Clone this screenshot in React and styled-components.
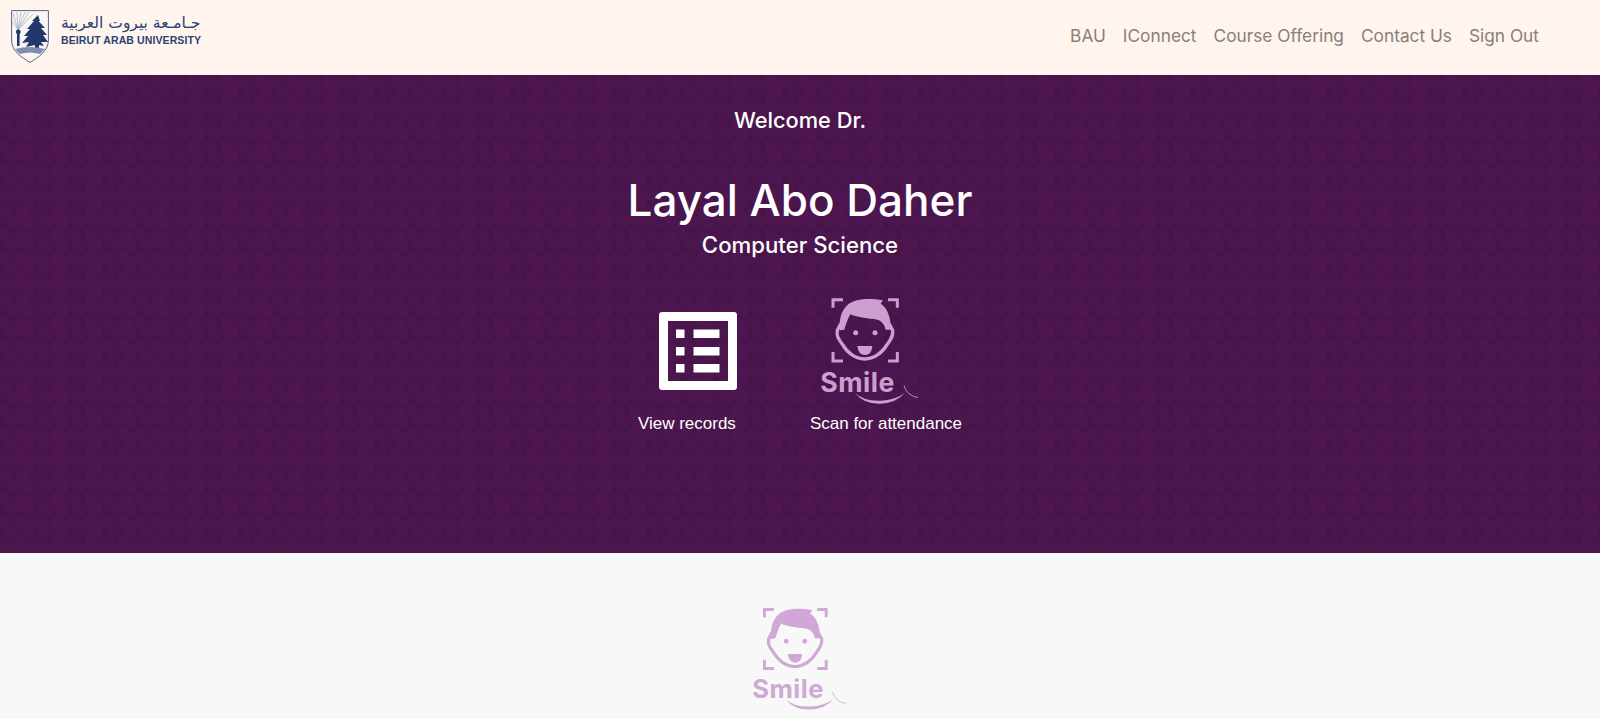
import React from "react";
import styled, { createGlobalStyle } from "styled-components";

const GlobalStyle = createGlobalStyle`
  html, body {
    margin: 0;
    padding: 0;
    height: 100%;
    overflow: hidden;
    background: #f8f8f8;
  }
`;

const Page = styled.div`
  display: flex;
  flex-direction: column;
  height: 719px;
  font-family: "Inter", "Liberation Sans", sans-serif;
`;

const Header = styled.header`
  display: flex;
  align-items: center;
  justify-content: space-between;
  height: 75px;
  padding: 0 61px 3px 11px;
  box-sizing: border-box;
  background: #fff4ee;
`;

const Brand = styled.a`
  display: flex;
  align-items: center;
  gap: 12px;
`;

const BrandText = styled.div`
  display: flex;
  flex-direction: column;
  width: 139px;
  margin-top: -13px;
  color: #2b4274;
`;

const BrandArabic = styled.span`
  font-family: "DejaVu Sans", sans-serif;
  font-size: 15.5px;
  line-height: 20px;
  text-align: center;
  white-space: nowrap;
`;

const BrandLatin = styled.span`
  font-family: "Liberation Sans", Arial, sans-serif;
  font-size: 10.5px;
  font-weight: 700;
  line-height: 14px;
  letter-spacing: 0.1px;
  white-space: nowrap;
`;

const Nav = styled.nav`
  display: flex;
  gap: 17px;
`;

const NavLink = styled.a`
  font-size: 17.3px;
  line-height: 24px;
  color: #8a7f78;
  white-space: nowrap;
`;

const Hero = styled.section`
  display: flex;
  flex-direction: column;
  align-items: center;
  height: 478px;
  padding-top: 31px;
  box-sizing: border-box;
  color: #fff;
  background-color: #4d1650;
  background-image:
    linear-gradient(45deg, rgba(0, 0, 0, 0.06) 25%, transparent 25%, transparent 75%, rgba(0, 0, 0, 0.06) 75%),
    linear-gradient(90deg, rgba(0, 0, 0, 0.03) 50%, transparent 50%);
  background-size: 17px 22px, 34px 22px;
`;

const Welcome = styled.h3`
  margin: 0;
  font-size: 21.8px;
  font-weight: 500;
  line-height: 28px;
`;

const Name = styled.h1`
  margin: 40px 0 0;
  font-size: 44px;
  font-weight: 500;
  line-height: 52px;
`;

const Department = styled.h4`
  margin: 5px 0 0;
  font-size: 22.2px;
  font-weight: 500;
  line-height: 28px;
`;

const Actions = styled.div`
  display: flex;
  gap: 73px;
  margin-top: 38px;
`;

const Action = styled.a`
  display: flex;
  flex-direction: column;
  align-items: flex-start;
  color: #fff;
`;

const ActionIcon = styled.div`
  display: flex;
  align-items: center;
  height: 108px;
  margin-left: ${(p) => p.$inset}px;
`;

const ActionLabel = styled.span`
  margin-top: 8px;
  font-family: "Liberation Sans", Arial, sans-serif;
  font-size: 17px;
  line-height: 22px;
  white-space: nowrap;
`;

const Footer = styled.section`
  display: flex;
  justify-content: center;
  flex: 1;
  padding: 46px 2px 0 0;
  background: #f8f8f8;
`;

const ShieldLogo = () => (
  <svg width="38" height="53" viewBox="0 0 38 53">
    <path d="M0.6 0.6 H37.4 V30 C37.4 41 28 47 19 52.4 C10 47 0.6 41 0.6 30 Z" fill="#fbf6f2" stroke="#51648e" strokeWidth="1" />
    <g stroke="#aab2c6" strokeWidth="0.8">
      <path d="M7 20 L2 3" />
      <path d="M7 20 L6 2" />
      <path d="M7 20 L10 2" />
      <path d="M7 20 L14 2" />
      <path d="M7 20 L18 2" />
      <path d="M7 20 L22 4" />
      <path d="M7 20 L2 12" />
    </g>
    <path
      d="M27 5 L29 11 L27.5 11 L34 18 L30 18 L36 25 L32 25 L37 32 L30 32 L33 36 L28 35 L28 41 L24 41 L24 35 L15 37 L18 32 L11 33 L17 26 L13 26 L19 19 L16 19 L23 11 L21 11 Z"
      fill="#22386d"
    />
    <rect x="6" y="24" width="2.6" height="12" fill="#22386d" />
    <circle cx="7.3" cy="22" r="2.4" fill="#22386d" />
    <path d="M4 39 Q19 35 34 39 L29 44 Q19 41 9 44 Z" fill="#7f8cab" />
  </svg>
);

const RecordsIcon = () => (
  <svg width="78" height="78" viewBox="0 0 78 78" style={{ display: "block" }}>
    <path
      fillRule="evenodd"
      d="M3 0 H75 A3 3 0 0 1 78 3 V75 A3 3 0 0 1 75 78 H3 A3 3 0 0 1 0 75 V3 A3 3 0 0 1 3 0 Z M9 9 V69 H69 V9 Z"
      fill="#fff"
    />
    <g fill="#fff">
      <rect x="17" y="17.5" width="8.5" height="8.5" />
      <rect x="17" y="35" width="8.5" height="8.5" />
      <rect x="17" y="52" width="8.5" height="8.5" />
      <rect x="34.5" y="17.5" width="26" height="8.5" />
      <rect x="34.5" y="35" width="26" height="8.5" />
      <rect x="34.5" y="52" width="26" height="8.5" />
    </g>
  </svg>
);

const SmileLogo = ({ width, color }) => (
  <svg width={width} viewBox="0 0 300 325" style={{ display: "block" }}>
    <g fill="none" stroke={color} strokeWidth="9">
      <path d="M42 32 V8 H72" />
      <path d="M207 8 H235 V32" />
      <path d="M42 165 V192 H72" />
      <path d="M207 192 H235 V165" />
      <path d="M65 80 L55 100 C52 115 57 125 71 143 C85 168 110 186 137 186 C164 186 190 168 204 143 C218 125 223 115 221 100 L210 80" strokeWidth="10" />
    </g>
    <path
      d="M62 100 C60 65 68 38 88 22 C108 5 150 2 192 10 L185 20 C205 32 218 65 214 98 L200 98 C196 82 188 72 175 68 C150 64 115 62 94 52 C86 66 80 84 76 98 Z"
      fill={color}
    />
    <circle cx="110" cy="107" r="7.5" fill={color} />
    <circle cx="168" cy="107" r="7.5" fill={color} />
    <path d="M115 147 H160 Q158 174 138 174 Q118 174 115 147 Z" fill={color} />
    <text x="4" y="285" fill={color} fontFamily="Inter, Liberation Sans, sans-serif" fontWeight="700" fontSize="80" letterSpacing="1.5">
      Smile
    </text>
    <path d="M108 288 Q135 322 185 320 Q232 318 257 288 Q230 309 185 311 Q135 313 108 288 Z" fill={color} />
    <path d="M255 265 Q262 296 298 302" fill="none" stroke={color} strokeWidth="2.5" />
  </svg>
);

const App = () => (
  <Page>
    <GlobalStyle />
    <Header>
      <Brand>
        <ShieldLogo />
        <BrandText>
          <BrandArabic>جـامـعة بيروت العربية</BrandArabic>
          <BrandLatin>BEIRUT ARAB UNIVERSITY</BrandLatin>
        </BrandText>
      </Brand>
      <Nav>
        {["BAU", "IConnect", "Course Offering", "Contact Us", "Sign Out"].map((item) => (
          <NavLink key={item}>{item}</NavLink>
        ))}
      </Nav>
    </Header>
    <Hero>
      <Welcome>Welcome Dr.</Welcome>
      <Name>Layal Abo Daher</Name>
      <Department>Computer Science</Department>
      <Actions>
        <Action>
          <ActionIcon $inset={21}>
            <RecordsIcon />
          </ActionIcon>
          <ActionLabel>View records</ActionLabel>
        </Action>
        <Action>
          <ActionIcon $inset={9}>
            <SmileLogo width={100} color="#cc9fcf" />
          </ActionIcon>
          <ActionLabel>Scan for attendance</ActionLabel>
        </Action>
      </Actions>
    </Hero>
    <Footer>
      <SmileLogo width={96} color="#d0a7d6" />
    </Footer>
  </Page>
);

export default App;
